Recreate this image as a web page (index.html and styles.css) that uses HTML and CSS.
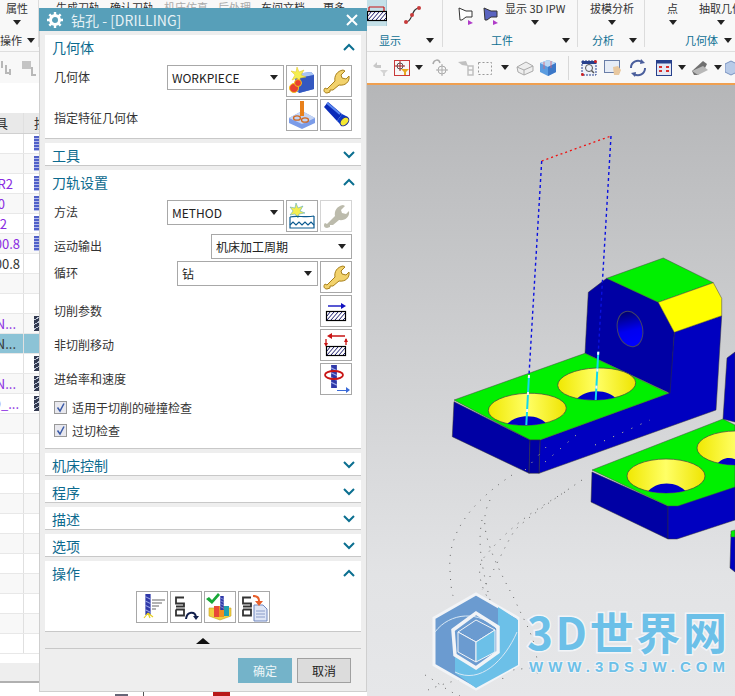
FILE: index.html
```html
<!DOCTYPE html>
<html lang="zh-CN">
<head>
    <meta charset="UTF-8">
    <title>钻孔 - [DRILLING]</title>
    <link rel="stylesheet" href="styles.css">
</head>
<body>
    <svg class="defs" width="0" height="0">
        <defs>
            <symbol id="wrench" viewBox="0 0 30 30">
                <path d="M6 27C3 27 2 24 4 22L6 23L8 21L14 15C13 10 16 5 22 4L24 5L20 9L21 12L25 13L28 10C29 16 24 20 18 19L12 24L9 24L9 26Z" fill="currentColor"/>
            </symbol>
            <symbol id="hatch" viewBox="0 0 30 14">
                <rect x="5.5" y="1.5" width="19" height="9" fill="#fff" stroke="#000" stroke-width="1.2"/>
                <path d="M6 10L13 2M10 10L17 2M14 10L21 2M18 10L24 3M6 6L9 2M22 10L24 8" stroke="#1c1c6e" stroke-width="1"/>
            </symbol>
            <symbol id="drill" viewBox="0 0 10 24">
                <rect x="2" y="0" width="6" height="24" fill="#2f38a8"/>
                <path d="M2 3L8 6M2 8L8 11M2 13L8 16M2 18L8 21" stroke="#9aa6e6" stroke-width="1.2"/>
            </symbol>
            <symbol id="code" viewBox="0 0 12 24">
                <path d="M10 2H2V8H10V11H2M2 14H10V20H2V14" transform="translate(0 1)" fill="none" stroke="#333" stroke-width="1.8"/>
            </symbol>
            <symbol id="drop" viewBox="0 0 8 5">
                <path d="M0 0H8L4 5Z" fill="#222"/>
            </symbol>
            <symbol id="chev-up" viewBox="0 0 12 8">
                <path d="M1 7L6 2L11 7" fill="none" stroke="#0b6f90" stroke-width="2"/>
            </symbol>
            <symbol id="chev-down" viewBox="0 0 12 8">
                <path d="M1 1L6 6L11 1" fill="none" stroke="#0b6f90" stroke-width="2"/>
            </symbol>
        </defs>
    </svg>

    <div class="ribbon">
        <div class="group g-op">
            <div class="items"><div class="cmd cmd-attr"><span>属性</span><svg class="drop"><use href="#drop"/></svg></div></div>
            <div class="group-label"><span>操作</span><svg class="drop"><use href="#drop"/></svg></div>
        </div>
        <div class="group g-mid">
            <div class="items mid-items">
                <span>生成刀轨</span><span>确认刀轨</span><span class="off">机床仿真</span><span class="off">后处理</span><span>车间文档</span><span class="more">更多</span>
            </div>
        </div>
        <div class="group g-show">
            <div class="items">
                <div class="active-tool">
                    <svg width="20" height="26" viewBox="0 0 20 26">
                        <path d="M2 7H17M2 7V11M17 7V11" stroke="#c81414" stroke-width="1.2" fill="none"/>
                        <g transform="translate(-5 10)"><use href="#hatch" width="30" height="14"/></g>
                    </svg>
                </div>
                <svg class="curve" width="20" height="20" viewBox="0 0 20 20">
                    <path d="M3 17C10 17 8 3 16 3" fill="none" stroke="#333" stroke-width="1.2"/>
                    <circle cx="3" cy="17" r="2" fill="#c83c3c"/><circle cx="9" cy="10" r="2" fill="#c83c3c"/><circle cx="16" cy="3" r="2" fill="#c83c3c"/>
                </svg>
            </div>
            <div class="group-label label-blue">显示<svg class="drop"><use href="#drop"/></svg></div>
        </div>
        <div class="group g-work">
            <div class="items">
                <svg class="work-icon" width="16" height="20" viewBox="0 0 16 20">
                    <path d="M1 3L8 6H14V12H8L4 15H2Z" fill="#fff" stroke="#333"/><path d="M10 15L15 18L10 20Z" fill="#b03cc8"/>
                </svg>
                <svg class="work-icon" width="16" height="20" viewBox="0 0 16 20">
                    <path d="M1 3L8 6H14V12H8L4 15H2Z" fill="#5a64c0" stroke="#333"/><path d="M10 15L15 18L10 20Z" fill="#b03cc8"/>
                </svg>
                <div class="cmd cmd-wide"><span>显示 3D IPW</span><svg class="drop"><use href="#drop"/></svg></div>
            </div>
            <div class="group-label label-blue">工件<svg class="drop"><use href="#drop"/></svg></div>
        </div>
        <div class="group g-ana">
            <div class="items"><div class="cmd"><span>拔模分析</span><svg class="drop"><use href="#drop"/></svg></div></div>
            <div class="group-label label-blue">分析<svg class="drop"><use href="#drop"/></svg></div>
        </div>
        <div class="group g-geo">
            <div class="items">
                <div class="cmd cmd-point"><span>点</span><svg class="drop"><use href="#drop"/></svg></div>
                <div class="cmd cmd-extract"><span>抽取几何</span><svg class="drop"><use href="#drop"/></svg></div>
            </div>
            <div class="group-label label-blue">几何体<svg class="drop"><use href="#drop"/></svg></div>
        </div>
    </div>

    <div class="toolbar">
        <div class="tools-left">
            <svg width="16" height="18" viewBox="0 0 16 18"><path d="M2 2V9M6 6V14H10M10 10V16" stroke="#b8b8b8" stroke-width="2" fill="none"/></svg>
            <svg width="18" height="18" viewBox="0 0 18 18"><rect x="2" y="2" width="9" height="8" fill="#c4c4c4"/><path d="M12 8V16H16" stroke="#b8b8b8" stroke-width="2" fill="none"/></svg>
        </div>
        <div class="tools-right">
            <svg width="18" height="18" viewBox="0 0 18 18"><path d="M2 7L6 3V6H10V9H5Z" fill="#c8c8c8"/><path d="M9 11H17L14 14V17H12V14Z" fill="#d4d4d4"/></svg>
            <span class="filter-btn">
                <svg width="14" height="14" viewBox="0 0 14 14"><circle cx="5" cy="5" r="3" fill="none" stroke="#555"/><path d="M5 0V10M0 5H10" stroke="#a02020"/><path d="M6 8H14L11 11V14H9V11Z" fill="#e8a820"/></svg>
            </span>
            <svg class="drop d5"><use href="#drop"/></svg>
            <svg class="m8" width="18" height="20" viewBox="0 0 18 20"><path d="M2 6C3 1 8 1 9 5" fill="none" stroke="#aaa" stroke-width="1.5"/><circle cx="11" cy="12" r="4" fill="none" stroke="#aaa"/><path d="M11 6V18M5 12H17" stroke="#aaa"/></svg>
            <svg class="m8" width="18" height="18" viewBox="0 0 18 18"><path d="M1 3L9 2L11 7L5 6Z" fill="#c0c0c0"/><path d="M11 7H16V16H11ZM11 11H16" fill="none" stroke="#c0c0c0" stroke-width="1.5"/></svg>
            <svg class="m2" width="16" height="16" viewBox="0 0 16 16"><rect x="1.5" y="2.5" width="13" height="12" fill="none" stroke="#999" stroke-dasharray="2 2"/></svg>
            <svg class="drop d8"><use href="#drop"/></svg>
            <svg class="m7" width="18" height="16" viewBox="0 0 18 16"><path d="M1 7L10 2L17 6V11L8 15L2 12Z" fill="#eee" stroke="#aaa"/><path d="M1 7L8 10L17 6M8 10V15" fill="none" stroke="#aaa"/></svg>
            <svg class="m5" width="18" height="18" viewBox="0 0 18 18"><path d="M9 1L17 4V13L9 17L1 13V4Z" fill="#5b9ce0"/><path d="M1 4L9 8L17 4L9 1Z" fill="#bcd8f4"/><path d="M9 8V17L17 13V4Z" fill="#3c78c8"/><path d="M5 3V10M12 2V9" stroke="#e06070" stroke-width=".8"/></svg>
            <span class="tool-sep"></span>
            <svg width="16" height="16" viewBox="0 0 16 16"><rect x="1" y="1" width="14" height="14" fill="#eef2fa" stroke="#27408c" stroke-dasharray="2 1"/><rect x="1" y="1" width="14" height="3" fill="#27408c"/><circle cx="8" cy="8" r="3.5" fill="none" stroke="#555"/><path d="M10.5 10.5L13 13" stroke="#555" stroke-width="1.5"/><circle cx="1.5" cy="14.5" r="1.5" fill="#d02020"/><circle cx="14.5" cy="1.5" r="1.5" fill="#d02020"/></svg>
            <svg class="m7" width="18" height="16" viewBox="0 0 18 16"><rect x="0.5" y="0.5" width="15" height="12" fill="#e6ecf6" stroke="#6a7ea8"/><path d="M9 7L14 6L17 10L15 15H10Z" fill="#e8c8a0"/></svg>
            <svg class="m7" width="18" height="18" viewBox="0 0 18 18"><path d="M2 9A7 7 0 0 1 13 3M16 9A7 7 0 0 1 5 15" fill="none" stroke="#4a5e9c" stroke-width="2"/><path d="M12 0L16 4L11 5ZM6 18L2 14L7 13Z" fill="#4a5e9c"/></svg>
            <svg class="m9" width="16" height="16" viewBox="0 0 16 16"><rect x="0.5" y="0.5" width="15" height="15" fill="#e4e8f4" stroke="#27408c"/><rect x="0.5" y="0.5" width="15" height="3" fill="#27408c"/><path d="M3 6H6V8H3ZM10 6H13V8H10ZM3 10H6V12H3ZM10 10H13V12H10Z" fill="#d83030"/></svg>
            <svg class="drop d6"><use href="#drop"/></svg>
            <svg class="m5" width="18" height="16" viewBox="0 0 18 16"><path d="M1 11L12 1L16 4L14 8L7 15H3Z" fill="#707070"/><path d="M1 11L12 6L17 10L7 15Z" fill="#b8b8b8"/></svg>
            <svg class="drop d5"><use href="#drop"/></svg>
            <svg class="m3" width="12" height="16" viewBox="0 0 12 16"><path d="M6 1L12 4V12L6 15L0 12V4Z" fill="#b8cbe8" stroke="#7a92c0"/></svg>
        </div>
    </div>

    <div class="main">
        <div class="nav-panel">
            <div class="table">
                <div class="row head"><div class="c1 end-9">具</div><div class="c2">按</div></div>
                <div class="row"><div class="c1"></div><div class="c2"><i class="chip"></i></div></div>
                <div class="row alt"><div class="c1"></div><div class="c2"><i class="chip"></i></div></div>
                <div class="row"><div class="c1 purple end-14">R2</div><div class="c2"><i class="chip"></i></div></div>
                <div class="row alt"><div class="c1 purple end-6">0</div><div class="c2"><i class="chip"></i></div></div>
                <div class="row"><div class="c1 purple end-8">.2</div><div class="c2"><i class="chip"></i></div></div>
                <div class="row alt"><div class="c1 purple end-21">00.8</div><div class="c2"><i class="chip"></i></div></div>
                <div class="row"><div class="c1 end-21">00.8</div><div class="c2"></div></div>
                <div class="row alt"><div class="c1"></div><div class="c2"></div></div>
                <div class="row"><div class="c1"></div><div class="c2"></div></div>
                <div class="row alt"><div class="c1 purple end-17">N...</div><div class="c2"><i class="tool"></i></div></div>
                <div class="row picked"><div class="c1 end-17">N...</div><div class="c2"></div></div>
                <div class="row"><div class="c1"></div><div class="c2"><i class="tool"></i></div></div>
                <div class="row alt"><div class="c1 purple end-17">N...</div><div class="c2"><i class="tool"></i></div></div>
                <div class="row"><div class="c1 purple end-20">D_...</div><div class="c2"><i class="tool"></i></div></div>
                <div class="row alt"><div class="c1"></div><div class="c2"></div></div>
                <div class="row"><div class="c1"></div><div class="c2"></div></div>
                <div class="row alt"><div class="c1"></div><div class="c2"></div></div>
                <div class="row"><div class="c1"></div><div class="c2"></div></div>
                <div class="row alt"><div class="c1"></div><div class="c2"></div></div>
                <div class="row"><div class="c1"></div><div class="c2"></div></div>
                <div class="row alt"><div class="c1"></div><div class="c2"></div></div>
                <div class="row"><div class="c1"></div><div class="c2"></div></div>
                <div class="row alt"><div class="c1"></div><div class="c2"></div></div>
                <div class="row"><div class="c1"></div><div class="c2"></div></div>
                <div class="row alt"><div class="c1"></div><div class="c2"></div></div>
                <div class="row"><div class="c1"></div><div class="c2"></div></div>
            </div>
            <div class="status-strip"></div>
            <div class="under"><i class="mark-dark"></i><i class="mark-line"></i><i class="mark-red"></i></div>
        </div>

        <div class="viewport">
            <svg class="scene" viewBox="367 83 368 613" width="368" height="613">
                <defs>
                    <linearGradient id="coneFill" x1="0" y1="0" x2="1" y2="0">
                        <stop offset="0" stop-color="#f0e800"/><stop offset=".5" stop-color="#ffff66"/><stop offset="1" stop-color="#eee400"/>
                    </linearGradient>
                    <linearGradient id="boreFill" x1="0" y1="0" x2="0" y2="1">
                        <stop offset="0" stop-color="#000070"/><stop offset=".55" stop-color="#0000f0"/><stop offset="1" stop-color="#0000ff"/>
                    </linearGradient>
                    <clipPath id="holeA"><ellipse cx="527.3" cy="409.3" rx="39" ry="16" transform="rotate(-2 527 409)"/></clipPath>
                    <clipPath id="holeB"><ellipse cx="596.7" cy="384" rx="39" ry="16" transform="rotate(-2 597 384)"/></clipPath>
                    <clipPath id="holeC"><ellipse cx="666" cy="476" rx="39" ry="17"/></clipPath>
                    <clipPath id="holeD"><ellipse cx="736" cy="448" rx="39" ry="17"/></clipPath>
                </defs>

                <!-- dotted rapid moves behind the parts -->
                <g class="dots">
                    <path d="M512 475C475 500 447 530 450 570C451 590 452 595 455 600"/>
                    <path d="M582 480C545 505 525 520 515 530C505 545 495 570 482 590"/>
                    <path d="M565 492C535 510 510 525 482 560C476 575 482 590 495 610"/>
                    <path d="M490 500C480 520 482 540 515 600C525 625 540 640 537 680"/>
                    <path d="M482 520C478 540 480 560 490 600C495 640 500 660 503 680"/>
                    <path d="M428 690C450 680 490 672 530 668"/>
                    <path d="M425 675C435 680 445 690 460 696"/>
                </g>

                <!-- second part, lower right -->
                <polygon class="side-dark" points="592,472 668,506 668,539 591,502"/>
                <polygon class="side-lite" points="668,506 735,486 735,520 677,539 668,539"/>
                <polygon class="top-green" points="592,470 723,419 735,425 735,487 678,506 668,506"/>
                <ellipse cx="666" cy="476" rx="39" ry="17" fill="url(#coneFill)" stroke="#444" stroke-width=".7"/>
                <path clip-path="url(#holeC)" d="M646 494C655 480 678 480 688 494Z" fill="#0000c8"/>
                <ellipse cx="736" cy="448" rx="39" ry="17" fill="url(#coneFill)" stroke="#444" stroke-width=".7"/>
                <path clip-path="url(#holeD)" d="M715 467C722 455 735 455 745 467Z" fill="#0000c8"/>
                <polygon class="side-lite" points="727,358 735,352 735,422 723,419"/>

                <!-- third part, at the edge -->
                <polygon class="side-lite" points="731,534 735,532 735,572 730,568"/>
                <polygon class="top-green" points="731,531 735,530 735,537 731,537"/>

                <!-- first part -->
                <polygon class="side-lite" points="674.3,332.3 721.7,315.7 716,410 539,473.3 540,440 668.7,393.3"/>
                <polygon class="side-dark" points="588.3,292.3 606.7,278.3 658.3,302.3 674.3,332.3 670,393.3 585,353.3"/>
                <polygon class="top-green" points="606.7,278.3 663.3,258 713.3,282.7 658.3,302.3"/>
                <polygon class="top-yellow" points="658.3,302.3 713.3,282.7 721.7,298.3 721.7,315.7 674.3,332.3"/>
                <ellipse cx="630" cy="329" rx="12.5" ry="18" transform="rotate(-14 630 329)" fill="url(#boreFill)" stroke="#444466" stroke-width="1"/>
                <polygon class="top-green" points="454,400 585,353.3 668.7,393.3 540,440 530,440"/>
                <polygon class="side-dark" points="454,401.7 530,440 529,473.3 452.3,436.7"/>
                <polygon class="side-dark" points="530,440 540,440 539,473.3 529,473.3"/>
                <ellipse cx="527.3" cy="409.3" rx="39" ry="16" transform="rotate(-2 527 409)" fill="url(#coneFill)" stroke="#444" stroke-width=".7"/>
                <path clip-path="url(#holeA)" d="M506 426C514 413 541 413 548 426Z" fill="#0000c8"/>
                <ellipse cx="596.7" cy="384" rx="39" ry="16" transform="rotate(-2 597 384)" fill="url(#coneFill)" stroke="#444" stroke-width=".7"/>
                <path clip-path="url(#holeB)" d="M575 401C584 388 610 388 618 401Z" fill="#0000c8"/>
                <path class="specks" d="M525 470L548 445M545 462L582 430M595 445L650 420"/>

                <!-- tool path -->
                <path class="path-red" d="M541.7 161L611 136"/>
                <path class="path-blue" d="M541.7 161L529 375M611 136L598.3 351.7"/>
                <path class="path-cyan" d="M529 375L526.3 425M598.3 351.7L595.7 400"/>
                <path class="path-white" d="M529 375L526.3 425M598.3 351.7L595.7 400"/>

                <!-- watermark -->
                <polygon points="476,594 518,618 518,665 476,689 434,665 434,618" fill="#6b9bd0" stroke="#f2f4f7" stroke-width="3"/>
                <polygon points="498,607 518,620 518,665 476,688 455,673 455,656 475,667 498,651" fill="#6cc0e8"/>
                <path d="M435 632C450 612 480 610 498 630M455 672C480 685 505 660 517 632" fill="none" stroke="#d8e8f5" stroke-width="1"/>
                <polygon points="453,630 476,613 498,627 498,652 476,668 455,655" fill="none" stroke="#f2f4f7" stroke-width="3.5"/>
                <polygon points="476,620 495,630 476,642 458,632" fill="#6b9bd0" stroke="#f2f4f7"/>
                <polygon points="458,632 476,642 476,662 458,652" fill="#6b9bd0" stroke="#f2f4f7"/>
                <polygon points="495,630 495,652 476,662 476,642" fill="#6cc0e8" stroke="#f2f4f7"/>
                <text class="logo-big" x="527" y="650" textLength="200">3D世界网</text>
                <text class="logo-small" x="529" y="672" textLength="196">WWW.3DSJW.COM</text>
            </svg>
        </div>
    </div>

    <!-- 钻孔 dialog -->
    <div class="dialog">
        <div class="title">
            <svg width="16" height="16" viewBox="0 0 16 16">
                <circle cx="8" cy="8" r="4.5" fill="none" stroke="#fff" stroke-width="3"/>
                <path d="M8 0V3M8 13V16M0 8H3M13 8H16M2.3 2.3L4.4 4.4M11.6 11.6L13.7 13.7M2.3 13.7L4.4 11.6M11.6 4.4L13.7 2.3" stroke="#fff" stroke-width="2.4"/>
            </svg>
            <span class="title-text">钻孔 - [DRILLING]</span>
            <svg class="close" width="12" height="12" viewBox="0 0 12 12"><path d="M1 1L11 11M11 1L1 11" stroke="#fff" stroke-width="2"/></svg>
        </div>
        <div class="dialog-body">
            <div class="section">
                <div class="sec-head">几何体<svg class="chev"><use href="#chev-up"/></svg></div>
                <div class="sec-body">
                    <div class="form-row">
                        <span class="lbl lbl-top">几何体</span>
                        <div class="pick pick-a"><span>WORKPIECE</span><svg class="drop"><use href="#drop"/></svg></div>
                        <button class="ico">
                            <svg viewBox="0 0 30 30">
                                <path d="M8 8L24 6L27 9V23L12 27L8 24Z" fill="#4a78e0"/><path d="M8 8L24 6L27 9L12 12Z" fill="#a8c4f4"/><path d="M12 12L27 9V23L12 27Z" fill="#3458c0"/>
                                <path d="M10 1L12 6L17 4L14 9L19 11L13 12L13 16L10 12L5 14L8 9L4 5L9 6Z" fill="#f4ee50" stroke="#e0c020" stroke-width=".5"/>
                                <circle cx="7" cy="22" r="4.5" fill="#e84030" stroke="#f0c020"/><circle cx="11" cy="17" r="3.5" fill="#e84030" stroke="#f0c020"/>
                            </svg>
                        </button>
                        <button class="ico gold"><svg viewBox="0 0 30 30"><use href="#wrench"/></svg></button>
                    </div>
                    <div class="form-row">
                        <span class="lbl lbl-low">指定特征几何体</span>
                        <button class="ico">
                            <svg viewBox="0 0 30 30">
                                <path d="M2 18L15 11L28 18V23L15 29L2 23Z" fill="#7c9ce8"/><path d="M2 18L15 11L28 18L15 24Z" fill="#c4d4f4"/>
                                <rect x="13" y="1" width="4" height="15" fill="#e8801c"/>
                                <ellipse cx="10" cy="18" rx="3.5" ry="2.2" fill="none" stroke="#d06820" stroke-width="1.3"/><ellipse cx="18" cy="20" rx="3.5" ry="2.2" fill="none" stroke="#d06820" stroke-width="1.3"/>
                            </svg>
                        </button>
                        <button class="ico">
                            <svg viewBox="0 0 30 30">
                                <path d="M3 7L7 2L21 14L16 21Z" fill="#0a2ab8"/><path d="M6 3L19 14" stroke="#5a88f0" stroke-width="2"/>
                                <path d="M21 14L27 17L21 26L16 21Z" fill="#0a38c8"/><ellipse cx="23.5" cy="21.5" rx="5" ry="3.5" transform="rotate(-45 23.5 21.5)" fill="#f4e830" stroke="#1a2a90"/>
                            </svg>
                        </button>
                    </div>
                </div>
            </div>

            <div class="section">
                <div class="sec-head">工具<svg class="chev"><use href="#chev-down"/></svg></div>
            </div>

            <div class="section">
                <div class="sec-head">刀轨设置<svg class="chev"><use href="#chev-up"/></svg></div>
                <div class="sec-body">
                    <div class="form-row">
                        <span class="lbl lbl-top">方法</span>
                        <div class="pick pick-a"><span>METHOD</span><svg class="drop"><use href="#drop"/></svg></div>
                        <button class="ico">
                            <svg viewBox="0 0 30 30">
                                <path d="M9 2L11 7L16 5L13 10L18 12L12 13L11 17L8 13L3 14L6 10L3 6L8 7Z" fill="#f4ee50" stroke="#40a0c0" stroke-width=".5"/>
                                <path d="M3 16C10 14 18 17 27 15M3 16V27H27V15" fill="none" stroke="#0a5a90" stroke-width="1.2"/>
                                <path d="M3 24L6 21L9 24L12 21L15 24L18 21L21 24L24 21L27 24" fill="none" stroke="#0a5a90" stroke-width="1.2"/>
                            </svg>
                        </button>
                        <button class="ico dim grey"><svg viewBox="0 0 30 30"><use href="#wrench"/></svg></button>
                    </div>
                    <div class="form-row short">
                        <span class="lbl">运动输出</span>
                        <div class="pick pick-b"><span>机床加工周期</span><svg class="drop"><use href="#drop"/></svg></div>
                    </div>
                    <div class="form-row">
                        <span class="lbl lbl-top">循环</span>
                        <div class="pick pick-b"><span>钻</span><svg class="drop"><use href="#drop"/></svg></div>
                        <button class="ico gold"><svg viewBox="0 0 30 30"><use href="#wrench"/></svg></button>
                    </div>
                    <div class="form-row">
                        <span class="lbl">切削参数</span>
                        <button class="ico">
                            <svg viewBox="0 0 30 30">
                                <path d="M7 10H21" stroke="#1010c0" stroke-width="1.4"/><path d="M20 7L25 10L20 13Z" fill="#1010c0"/>
                                <use href="#hatch" y="14" width="30" height="14"/>
                            </svg>
                        </button>
                    </div>
                    <div class="form-row">
                        <span class="lbl">非切削移动</span>
                        <button class="ico">
                            <svg viewBox="0 0 30 30">
                                <path d="M9 6H24M5 9V15M25 9V15" stroke="#c81414" stroke-width="1.3" fill="none"/>
                                <path d="M6 6L11 3V9ZM3 13H7L5 17ZM23 12H27L25 8Z" fill="#c81414"/>
                                <use href="#hatch" y="15" width="30" height="14"/>
                            </svg>
                        </button>
                    </div>
                    <div class="form-row">
                        <span class="lbl">进给率和速度</span>
                        <button class="ico">
                            <svg viewBox="0 0 30 30">
                                <use href="#drill" x="8" y="1" width="10" height="23"/>
                                <ellipse cx="13" cy="11" rx="9" ry="4" fill="none" stroke="#c81414" stroke-width="1.8"/>
                                <path d="M16 26H25V23L29 26L25 29V27H16Z" fill="#3a6ad8"/>
                            </svg>
                        </button>
                    </div>
                    <label class="check first"><i class="box"><svg width="11" height="11" viewBox="0 0 11 11"><path d="M2.5 5.5L5 9L9 1.5" fill="none" stroke="#3a5aa8" stroke-width="1.5"/></svg></i>适用于切削的碰撞检查</label>
                    <label class="check"><i class="box"><svg width="11" height="11" viewBox="0 0 11 11"><path d="M2.5 5.5L5 9L9 1.5" fill="none" stroke="#3a5aa8" stroke-width="1.5"/></svg></i>过切检查</label>
                </div>
            </div>

            <div class="section"><div class="sec-head">机床控制<svg class="chev"><use href="#chev-down"/></svg></div></div>
            <div class="section"><div class="sec-head">程序<svg class="chev"><use href="#chev-down"/></svg></div></div>
            <div class="section"><div class="sec-head">描述<svg class="chev"><use href="#chev-down"/></svg></div></div>
            <div class="section"><div class="sec-head">选项<svg class="chev"><use href="#chev-down"/></svg></div></div>

            <div class="section last">
                <div class="sec-head">操作<svg class="chev"><use href="#chev-up"/></svg></div>
                <div class="op-row">
                    <button class="ico">
                        <svg viewBox="0 0 30 30">
                            <use href="#drill" x="6" y="2" width="10" height="21"/>
                            <path d="M15 8H28M15 11H25M15 14H22M15 17H19" stroke="#666" stroke-width="1.2"/>
                            <path d="M11 21L13 26M11 21L7 26M11 21L16 25" stroke="#e8d020" stroke-width="1.2"/>
                        </svg>
                    </button>
                    <button class="ico">
                        <svg viewBox="0 0 30 30">
                            <use href="#code" x="3" y="2" width="12" height="25"/>
                            <path d="M15 27C16 19 24 19 25 25" fill="none" stroke="#12204c" stroke-width="2"/><path d="M22 24H28L25 28Z" fill="#12204c"/>
                        </svg>
                    </button>
                    <button class="ico">
                        <svg viewBox="0 0 30 30">
                            <path d="M1 7L4 5L7 8L13 1L15 3L7 12Z" fill="#18a838"/>
                            <path d="M4 16H26V24L15 28L4 24Z" fill="#f0d040" stroke="#c8a020" stroke-width=".6"/>
                            <rect x="9" y="14" width="5" height="11" fill="#e84838"/><rect x="14" y="14" width="5" height="11" fill="#f09020"/><rect x="19" y="14" width="5" height="10" fill="#20a0b0"/>
                            <use href="#drill" x="13" y="4" width="8" height="14"/>
                        </svg>
                    </button>
                    <button class="ico">
                        <svg viewBox="0 0 30 30">
                            <use href="#code" x="2" y="2" width="12" height="25"/>
                            <path d="M15 13H24L28 17V29H15Z" fill="#dfe6f6" stroke="#7088c0"/>
                            <path d="M17 19H26M17 22H26M17 25H26" stroke="#8a9cc8"/>
                            <path d="M14 3C20 3 21 6 21 9H24L20 14L16 9H19C19 7 18 5 14 5Z" fill="#e8602c"/>
                        </svg>
                    </button>
                </div>
            </div>
            <div class="collapse-bar"><svg width="14" height="6" viewBox="0 0 14 6"><path d="M7 0L14 6H0Z" fill="#111"/></svg></div>
            <div class="dialog-foot">
                <button class="btn ok">确定</button>
                <button class="btn">取消</button>
            </div>
        </div>
    </div>
</body>
</html>
```

FILE: styles.css
```css
* {
    box-sizing: border-box;
}
html, body {
    margin: 0;
    padding: 0;
}
body {
    position: relative;
    width: 735px;
    height: 696px;
    overflow: hidden;
    background: #fff;
    color: #333;
    font-family: "Noto Sans CJK SC", "Noto Sans", sans-serif;
    font-size: 12px;
}
.defs {
    position: absolute;
}
.drop {
    width: 8px;
    height: 5px;
    flex: none;
}

/* ribbon */
.ribbon {
    display: flex;
    height: 52px;
    background: #f8f8f8;
    border-bottom: 1px solid #dedede;
    overflow: hidden;
}
.group {
    display: flex;
    flex: none;
    flex-direction: column;
    border-right: 1px solid #dcdcdc;
    margin-bottom: 4px;
}
.items {
    display: flex;
    height: 35px;
    align-items: flex-start;
}
.group-label {
    position: relative;
    display: flex;
    align-items: center;
    height: 14px;
    line-height: 14px;
    font-size: 11px;
}
.group-label .drop {
    position: absolute;
    top: 5px;
}
.label-blue {
    color: #0d6f93;
}
.g-op {
    width: 39px;
}
.g-op .group-label .drop {
    right: 3px;
}
.cmd-attr {
    padding-left: 6px;
}
.g-mid {
    width: 328px;
    border-right: 0;
}
.mid-items {
    gap: 10px;
    padding-left: 17px;
    line-height: 14px;
    font-size: 11px;
}
.more {
    margin-left: 8px;
}
.off {
    color: #aaa;
}
.g-show {
    width: 76px;
}
.g-show .group-label {
    padding-left: 12px;
}
.g-show .group-label .drop {
    right: 8px;
}
.g-work {
    width: 135px;
}
.g-work .group-label {
    padding-left: 48px;
}
.g-work .group-label .drop {
    right: 7px;
}
.g-ana {
    width: 67px;
}
.g-ana .group-label {
    padding-left: 14px;
}
.g-ana .group-label .drop {
    right: 7px;
}
.g-geo {
    flex: 1;
    min-width: 0;
    border-right: 0;
    overflow: hidden;
}
.g-geo .group-label {
    padding-left: 40px;
}
.g-geo .group-label .drop {
    right: 3px;
}
.cmd {
    display: flex;
    flex: none;
    flex-direction: column;
    align-items: center;
    gap: 4px;
    line-height: 16px;
    font-size: 11px;
    white-space: nowrap;
}
.g-ana .cmd {
    margin-left: 12px;
}
.cmd-wide {
    margin-left: 6px;
}
.cmd-point {
    margin-left: 22px;
}
.cmd-extract {
    margin-left: 21px;
}
.active-tool {
    width: 20px;
    height: 26px;
    background: #c4e0e8;
    border-right: 1px solid #a8c8d4;
}
.curve {
    margin: 5px 0 0 16px;
}
.work-icon {
    margin: 5px 0 0 9px;
}
.work-icon:first-child {
    margin-left: 15px;
}

/* second toolbar */
.toolbar {
    display: flex;
    height: 31px;
    align-items: center;
    background: #f8f8f8;
    overflow: hidden;
}
.tools-left {
    display: flex;
    flex: none;
    width: 367px;
    gap: 4px;
}
.tools-right {
    display: flex;
    flex: none;
    align-items: center;
    padding-left: 4px;
}
.tools-right svg {
    flex: none;
}
.filter-btn {
    display: flex;
    justify-content: center;
    align-items: center;
    width: 16px;
    height: 16px;
    margin-left: 5px;
    border: 1px solid #c83a3a;
}
.d5 { margin-left: 5px; }
.d6 { margin-left: 6px; }
.d8 { margin-left: 8px; }
.m2 { margin-left: 2px; }
.m3 { margin-left: 3px; }
.m5 { margin-left: 5px; }
.m7 { margin-left: 7px; }
.m8 { margin-left: 8px; }
.m9 { margin-left: 9px; }
.tool-sep {
    width: 1px;
    height: 24px;
    margin: 0 12px 0 11px;
    background: #d8d8d8;
}

/* table and viewport */
.main {
    display: flex;
    height: 613px;
}
.nav-panel {
    flex: none;
    width: 367px;
    padding-top: 30px;
    background: #fff;
}
.table {
    height: 550px;
    overflow: hidden;
}
.status-strip {
    height: 20px;
    background: #eeeeee;
    border-bottom: 2px solid #b0b0b0;
}
.under {
    display: flex;
    align-items: flex-end;
    height: 13px;
    padding-left: 115px;
}
.mark-dark {
    width: 13px;
    height: 2px;
    background: #667;
}
.mark-line {
    width: 1px;
    height: 13px;
    margin-left: 15px;
    background: #555;
}
.mark-red {
    width: 17px;
    height: 4px;
    margin-left: 69px;
    background: #b81818;
}
.row {
    display: flex;
    height: 20px;
    line-height: 19px;
    border-bottom: 1px solid #e8e8e8;
    font-size: 13px;
}
.row.alt {
    background: #f8f8f8;
}
.row.head {
    height: 21px;
    background: #e9e9e9;
    border-bottom: 1px solid #d0d0d0;
}
.row.picked {
    background: #8cc3d6;
}
.c1 {
    display: flex;
    flex: none;
    justify-content: flex-end;
    width: 24px;
    border-right: 1px solid #e0e0e0;
    white-space: nowrap;
}
.end-6 { padding-right: 18px; }
.end-8 { padding-right: 16px; }
.end-9 { padding-right: 15px; }
.end-14 { padding-right: 10px; }
.end-17 { padding-right: 7px; }
.end-20 { padding-right: 4px; }
.end-21 { padding-right: 3px; }
.c2 {
    flex: 1;
    padding-left: 10px;
}
.purple {
    color: #8a2be2;
}
.chip {
    display: block;
    width: 5px;
    height: 15px;
    margin-top: 2px;
    background: repeating-linear-gradient(#5060c8 0 2px, #b4bcec 2px 3px);
}
.tool {
    display: block;
    width: 5px;
    height: 15px;
    margin-top: 2px;
    background: repeating-linear-gradient(150deg, #333a50 0 3px, #c0c8d8 3px 4px);
}
.viewport {
    position: relative;
    flex: 1;
    background: linear-gradient(#f0a050 0 2px, #b5b6b8 2px, #cfd0d2 45%, #e2e3e5 80%, #e6e7e9);
}
.scene {
    display: block;
}
.side-dark {
    fill: #0000a4;
    stroke: #333;
    stroke-width: .5;
}
.side-lite {
    fill: #0000c0;
    stroke: #333;
    stroke-width: .5;
}
.top-green {
    fill: #00f000;
    stroke: #444;
    stroke-width: .5;
}
.top-yellow {
    fill: #ffff00;
    stroke: #444;
    stroke-width: .5;
}
.dots path {
    fill: none;
    stroke: #666;
    stroke-width: 1;
    stroke-dasharray: 1 7;
}
.specks {
    fill: none;
    stroke: #d8d890;
    stroke-width: 1;
    stroke-dasharray: 1 9;
}
.path-red {
    stroke: #f01010;
    stroke-width: 1.3;
    stroke-dasharray: 2 3;
}
.path-blue {
    stroke: #0a10e0;
    stroke-width: 1.4;
    stroke-dasharray: 3 3;
}
.path-cyan {
    stroke: #10d8f0;
    stroke-width: 2;
}
.path-white {
    stroke: #f4f4ff;
    stroke-width: 2;
    stroke-dasharray: 3 14;
}
.logo-big {
    fill: #6cc0e8;
    stroke: #f2f4f7;
    stroke-width: 3;
    paint-order: stroke;
    font-family: "Noto Sans CJK SC", sans-serif;
    font-size: 44px;
    font-weight: 700;
}
.logo-small {
    fill: #6cc0e8;
    stroke: #f2f4f7;
    stroke-width: 2;
    paint-order: stroke;
    font-family: "Liberation Sans", sans-serif;
    font-size: 15px;
    font-weight: 700;
}

/* dialog, floats over the table */
.dialog {
    position: absolute;
    left: 39px;
    top: 8px;
    width: 328px;
    height: 684px;
    background: #eeeeee;
    border: 1px solid #cfcfcf;
    border-top: 0;
}
.title {
    display: flex;
    align-items: center;
    height: 23px;
    margin: 0 -1px;
    padding-left: 8px;
    background: #579fb9;
    color: #fff;
}
.title-text {
    margin-left: 8px;
    font-size: 14px;
    color: #e6f1f5;
}
.close {
    margin-left: auto;
    margin-right: 9px;
}
.dialog-body {
    padding: 4px 5px 0;
}
.section {
    margin-bottom: 4px;
    background: #fff;
    border-bottom: 1px solid #c8c8c8;
}
.section.last {
    margin-bottom: 0;
}
.sec-head {
    position: relative;
    height: 22px;
    padding-left: 7px;
    line-height: 24px;
    font-size: 14px;
    color: #0c6a8e;
}
.chev {
    position: absolute;
    right: 6px;
    top: 8px;
    width: 12px;
    height: 8px;
}
.sec-body {
    display: flex;
    flex-direction: column;
    gap: 2px;
    padding: 8px 9px 11px;
}
.section:first-child .sec-body {
    padding-bottom: 7px;
}
.form-row {
    display: flex;
    align-items: center;
    justify-content: flex-end;
    gap: 2px;
    min-height: 32px;
}
.form-row.short {
    min-height: 25px;
}
.lbl {
    margin-right: auto;
    padding-bottom: 2px;
    font-size: 12px;
    color: #333;
}
.lbl-top {
    align-self: flex-start;
    padding-bottom: 0;
    line-height: 23px;
}
.lbl-low {
    padding-top: 6px;
}
.pick {
    display: flex;
    align-items: center;
    justify-content: space-between;
    align-self: flex-start;
    height: 25px;
    padding: 0 5px 1px 4px;
    background: #fff;
    border: 1px solid #a8a8a8;
    font-size: 12px;
    color: #222;
}
.pick-a {
    width: 117px;
}
.pick-b {
    width: 141px;
}
.ico {
    flex: none;
    width: 32px;
    height: 32px;
    padding: 0;
    background: #fff;
    border: 1px solid #a8a8a8;
}
.ico svg {
    display: block;
    width: 30px;
    height: 30px;
}
.ico.gold {
    color: #f2d26c;
}
.ico.gold svg {
    stroke: #a8801c;
    stroke-width: 1;
}
.ico.grey {
    color: #bcbbac;
}
.ico.dim {
    border-color: #d4d4d4;
}
.check {
    display: flex;
    align-items: center;
    height: 13px;
    margin-top: 8px;
    font-size: 12px;
    color: #333;
}
.check.first {
    margin-top: 4px;
}
.box {
    display: flex;
    justify-content: center;
    align-items: center;
    width: 13px;
    height: 13px;
    margin-right: 5px;
    background: #e8e8ee;
    border: 1px solid #999;
}
.op-row {
    display: flex;
    justify-content: center;
    gap: 2px;
    padding: 8px 0;
}
.collapse-bar {
    display: flex;
    justify-content: center;
    align-items: center;
    height: 17px;
    padding-top: 2px;
    border-bottom: 1px solid #c8c8c8;
}
.dialog-foot {
    display: flex;
    justify-content: flex-end;
    gap: 5px;
    padding: 9px 10px 0 0;
}
.btn {
    width: 54px;
    height: 25px;
    padding: 0;
    background: #dcdcdc;
    border: 1px solid #a0a0a0;
    font-family: inherit;
    font-size: 12px;
    color: #222;
}
.btn.ok {
    background: #74b3c9;
    border-color: #74b3c9;
    color: #eef6f8;
}
```
